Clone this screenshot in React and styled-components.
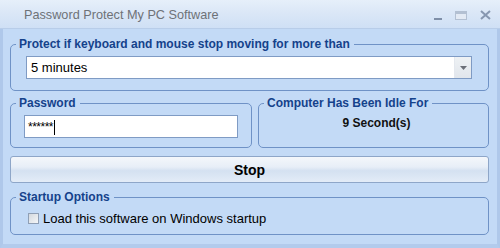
import React from 'react';
import styled, { createGlobalStyle } from 'styled-components';

const GlobalStyle = createGlobalStyle`
    html, body {
        margin: 0;
        padding: 0;
        width: 500px;
        height: 248px;
        overflow: hidden;
        font-family: "Liberation Sans", Arial, sans-serif;
    }
`

const App = () => {
    return (
        <Window>
            <GlobalStyle />
            <TitleBar>
                <Title>Password Protect My PC Software</Title>
                <Controls>
                    <MinButton />
                    <MaxButton />
                    <CloseButton>
                        <svg width="11" height="10" viewBox="0 0 11 10">
                            <path d="M1 1 L10 9 M10 1 L1 9" stroke="#8797b0" strokeWidth="2" />
                        </svg>
                    </CloseButton>
                </Controls>
            </TitleBar>
            <Body>
                <Group pad="5px 16px 11px 5px">
                    <Legend>Protect if keyboard and mouse stop moving for more than</Legend>
                    <Combo>
                        <ComboText>5 minutes</ComboText>
                        <ComboArrow>
                            <svg width="7" height="4" viewBox="0 0 7 4">
                                <path d="M0 0 H7 L3.5 4 Z" fill="#6b6f78" />
                            </svg>
                        </ComboArrow>
                    </Combo>
                </Group>
                <Row>
                    <Group width="243px" pad="5px 13px 9px 5px" top="5px">
                        <Legend>Password</Legend>
                        <PassInput>
                            <span>******</span>
                            <Caret />
                        </PassInput>
                    </Group>
                    <Group width="232px" pad="5px 5px 9px 5px" top="5px">
                        <Legend>Computer Has Been Idle For</Legend>
                        <IdleText>9 Second(s)</IdleText>
                    </Group>
                </Row>
                <StopButton>Stop</StopButton>
                <Group pad="7px 15px 8px 5px" top="7px">
                    <Legend>Startup Options</Legend>
                    <CheckRow>
                        <CheckBox />
                        <span>Load this software on Windows startup</span>
                    </CheckRow>
                </Group>
            </Body>
        </Window>
    )
}

export default App

const Window = styled.div`
    width: 500px;
    height: 248px;
    box-sizing: border-box;
    display: flex;
    flex-direction: column;
    background: #c3daf6;
    border-left: 3px solid #afc8ea;
    border-right: 3px solid #afc8ea;
    border-bottom: 4px solid #b3cbec;
`

const TitleBar = styled.div`
    height: 29px;
    flex-shrink: 0;
    display: flex;
    align-items: center;
    justify-content: space-between;
    margin: 0 -3px;
    padding: 0 9px 0 24px;
    background: linear-gradient(#e6effa, #dbe7f7 45%, #cfe0f5);
    border-bottom: 1px solid #b8cde9;
    box-sizing: border-box;
`

const Title = styled.div`
    font-size: 12.7px;
    color: #6e7277;
    padding-top: 1px;
`

const Controls = styled.div`
    display: flex;
    align-items: center;
    gap: 13px;
    padding-top: 2px;
`

const MinButton = styled.div`
    width: 8px;
    height: 2px;
    background: #7f8fa8;
    margin-top: 8px;
`

const MaxButton = styled.div`
    width: 10px;
    height: 5px;
    border: 1px solid #b3c0d2;
    border-top: 3px solid #b3c0d2;
    background: #e3eaf4;
`

const CloseButton = styled.div`
    display: flex;
    margin-left: 0;
`

const Body = styled.div`
    flex: 1;
    display: flex;
    flex-direction: column;
    padding: 0 8px 0 7px;
`

const Group = styled.fieldset`
    margin: ${props => props.top || '8px'} 0 0;
    width: ${props => props.width || 'auto'};
    box-sizing: border-box;
    padding: ${props => props.pad};
    border: 1px solid #6f92c6;
    border-radius: 5px;
    min-width: 0;
`

const Legend = styled.legend`
    font-size: 12px;
    font-weight: bold;
    line-height: 14px;
    color: #15428b;
    padding: 0 4px 0 3px;
    white-space: nowrap;
`

const Combo = styled.div`
    height: 23px;
    margin-left: 10px;
    box-sizing: border-box;
    display: flex;
    align-items: stretch;
    background: #fff;
    border: 1px solid #7f9bc4;
`

const ComboText = styled.div`
    flex: 1;
    display: flex;
    align-items: center;
    padding-left: 4px;
    font-size: 13px;
    color: #000;
`

const ComboArrow = styled.div`
    width: 16px;
    display: flex;
    align-items: center;
    justify-content: center;
    background: linear-gradient(#eef1f4, #e1e6ec);
    border-left: 1px solid #e4e8ee;
`

const Row = styled.div`
    display: flex;
    gap: 6px;
`

const PassInput = styled.div`
    height: 23px;
    margin-left: 8px;
    box-sizing: border-box;
    display: flex;
    align-items: center;
    background: #fff;
    border: 1px solid #7f9bc4;
    padding-left: 3px;
    font-size: 12px;
    letter-spacing: -0.5px;
    color: #000;
`

const Caret = styled.div`
    width: 1px;
    height: 15px;
    background: #000;
    margin-left: 1px;
    margin-top: 2px;
`

const IdleText = styled.div`
    text-align: center;
    font-size: 12px;
    font-weight: bold;
    color: #111;
    line-height: 16px;
    padding-left: 6px;
`

const StopButton = styled.button`
    margin-top: 8px;
    height: 27px;
    width: 100%;
    box-sizing: border-box;
    border: 1px solid #8ea6c8;
    border-radius: 3px;
    background: linear-gradient(#f4f7fb, #e7eef7 40%, #d4e1f1 55%, #e3ecf7);
    font-family: "Liberation Sans", Arial, sans-serif;
    font-size: 14px;
    font-weight: bold;
    color: #000;
    padding: 0;
`

const CheckRow = styled.div`
    display: flex;
    align-items: center;
    gap: 4px;
    margin-left: 12px;
    font-size: 13px;
    line-height: 15px;
    color: #000;
`

const CheckBox = styled.div`
    width: 11px;
    height: 11px;
    box-sizing: border-box;
    border: 1px solid #8f9fb5;
    background: linear-gradient(135deg, #d4d9df, #f4f6f8);
`
